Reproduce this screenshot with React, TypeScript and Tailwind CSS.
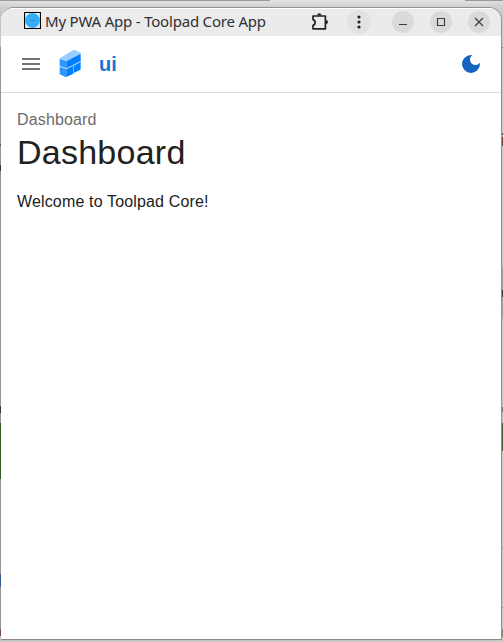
import React from "react";

function ToolpadLogo() {
  return (
    <svg width="24" height="30" viewBox="0 0 72 90">
      <path d="M5 31 46 6Q48 5 50 6L68 14V17L25 40 5 33Z" fill="#99ccff" />
      <path d="M5 33 25 40V61L5 54Z" fill="#2e96ff" />
      <path d="M25 40 68 17V39L47 51 25 61Z" fill="#007fff" />
      <path d="M5 54 25 61 68 39V42L25 64 5 57Z" fill="#99ccff" />
      <path d="M5 57 25 64V87Q23 87 21 86L5 79Z" fill="#2e96ff" />
      <path d="M25 64 46 53V77L25 87Z" fill="#007fff" />
      <path d="M47 53 68 42V63Q68 65 66 66L47 75Z" fill="#007fff" />
      <path d="M46.5 53V76" stroke="#66b2ff" strokeWidth="2" />
    </svg>
  );
}

function TitleBar() {
  return (
    <div className="flex h-7 shrink-0 items-center border-t border-white bg-[#ebebeb] pl-[23px] pr-[11px]">
      <svg className="mb-1 shrink-0" width="17" height="17" viewBox="0 0 17 17">
        <path d="M0.5 0.5H16.5V16.5H0.5Z" fill="#e7f2fa" stroke="#000" strokeWidth="1.2" />
        <circle cx="8.5" cy="8.5" r="7.4" fill="#36adf7" />
        <path d="M6 9l1-1 1 1 1-1 1 1 1-1" fill="none" stroke="#2b8dc9" strokeWidth="0.9" />
      </svg>
      <span className="ml-1 w-[222px] shrink-0 whitespace-nowrap pb-[3px] font-['Noto_Sans',sans-serif] text-[15px] leading-5 tracking-[-0.2px] text-[#303033]">
        My PWA App - Toolpad Core App
      </span>
      <div className="ml-auto flex shrink-0 items-center pb-[2px]">
        <svg width="20" height="20" viewBox="0 0 20 20" fill="none" stroke="#222326" strokeWidth="1.7" strokeLinejoin="round">
          <path d="M3 4H15.4V16.8H3V13.4C5.8 12.6 5.8 8.4 3 7.6Z" />
          <path d="M7.2 3.4a2.1 2.1 0 0 1 4.2 0ZM15.9 8a2.1 2.1 0 0 1 0 4.2Z" fill="#222326" stroke="none" />
        </svg>
        <div className="ml-[17px] flex size-6 items-center justify-center rounded-full bg-[#e2e2e2]">
          <svg width="4" height="14" viewBox="0 0 4 14" fill="#222326">
            <circle cx="2" cy="2" r="1.6" />
            <circle cx="2" cy="7" r="1.6" />
            <circle cx="2" cy="12" r="1.6" />
          </svg>
        </div>
        <div className="ml-[21px] flex gap-4">
          {["M7 13.5H15", "M7.5 7.5H14.5V14.5H7.5Z", "M7 7 15 15M15 7 7 15"].map((d) => (
            <svg key={d} className="rounded-full bg-[#dadada]" width="22" height="22" viewBox="0 0 22 22" fill="none" stroke="#3d3d3d" strokeWidth="1.2">
              <path d={d} />
            </svg>
          ))}
        </div>
      </div>
    </div>
  );
}

/* Slivers of the windows behind, one [height, colour] pair per band */
type Band = [number, string];

const leftBands: Band[] = [
  [40, "#c5c5c5"], [97, "#949494"], [2, "#765033"], [19, "#949494"], [6, "#25384e"],
  [235, "#949494"], [7, "#373737"], [10, "#949494"], [56, "#32591f"], [95, "#949494"],
  [13, "#385b89"], [42, "#949494"], [7, "#765050"],
];

const rightBands: Band[] = [
  [40, "#cccccc"], [1, "#777777"], [85, "#c5c5c5"], [2, "#70452c"], [2, "#c5c5c5"],
  [9, "#70452c"], [121, "#c5c5c5"], [23, "#9ba4ae"], [7, "#3f342f"], [22, "#9ba4ae"],
  [88, "#c5c5c5"], [5, "#777777"], [11, "#c5c5c5"], [28, "#376128"], [97, "#c5c5c5"],
  [1, "#888888"], [58, "#c5c5c5"], [1, "#888888"], [21, "#c5c5c5"], [8, "#99806b"],
];

function Edge({ bands }: { bands: Band[] }) {
  return (
    <div className="flex w-px shrink-0 flex-col">
      {bands.map(([height, backgroundColor], i) => (
        <div key={i} style={{ height, backgroundColor }} />
      ))}
    </div>
  );
}

export default function App() {
  return (
    <div className="flex h-[642px] w-[503px] flex-col overflow-hidden bg-[linear-gradient(180deg,#e2e2e2_0px,#d0d0d0_7px,#c5c5c5_20px,#c5c5c5_636px,#c8c8c8_642px)] font-['Liberation_Sans',Arial,sans-serif]">
      <div className="flex h-[7px] shrink-0 justify-between">
        <div className="w-[270px] border-t border-[#999]" />
        <div className="w-[38px] border-t border-[#999]" />
      </div>

      <div className="flex h-[633px] shrink-0">
        <Edge bands={leftBands} />
        <div className="flex min-w-0 flex-1 flex-col overflow-hidden rounded-t-[13px] border-b border-r border-t border-b-[#888] border-r-[#929292] border-t-[#929292] bg-white">
          <TitleBar />
          <header className="flex h-[57px] shrink-0 items-center border-b border-[#dedede] pl-[18px] pr-[18px]">
            <svg width="24" height="24" viewBox="0 0 24 24" fill="#757575">
              <path d="M3 18h18v-2H3v2zm0-5h18v-2H3v2zm0-7v2h18V6H3z" />
            </svg>
            <div className="mb-[3px] ml-[15px]">
              <ToolpadLogo />
            </div>
            <span className="ml-[17px] text-[20px] font-bold leading-6 text-[#1976d2]">ui</span>
            <svg className="ml-auto" width="24" height="24" viewBox="0 0 24 24" fill="#1565c0">
              <path d="M12 3a9 9 0 1 0 9 9c0-.46-.04-.92-.1-1.36a5.389 5.389 0 0 1-4.4 2.26 5.403 5.403 0 0 1-3.14-9.8c-.44-.06-.9-.1-1.36-.1z" />
            </svg>
          </header>
          <main className="px-4 pt-[15px] text-[#212121]">
            <div className="text-base leading-6 tracking-[0.15px] text-[#6b6b6b]">Dashboard</div>
            <h1 className="text-[34px] leading-10 tracking-[0.25px]">Dashboard</h1>
            <p className="mt-[18px] text-base leading-6 tracking-[0.15px]">Welcome to Toolpad Core!</p>
          </main>
        </div>
        <Edge bands={rightBands} />
      </div>
    </div>
  );
}
